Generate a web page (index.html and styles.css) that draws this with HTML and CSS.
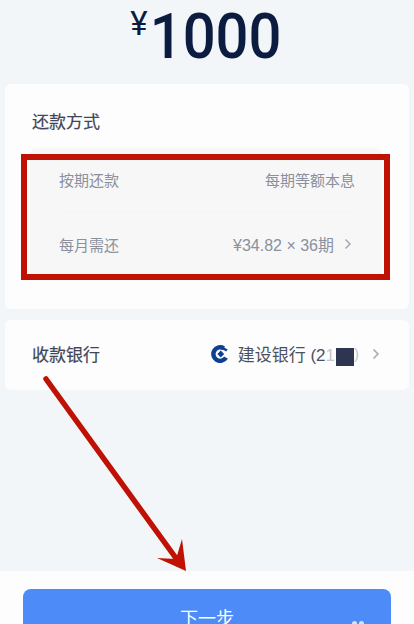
FILE: index.html
```html
<!DOCTYPE html>
<html lang="zh-CN">
<head>
  <meta charset="UTF-8">
  <meta name="viewport" content="width=device-width, initial-scale=1.0">
  <title>还款方式</title>
  <link rel="stylesheet" href="styles.css">
</head>
<body>
  <div class="page">
    <div class="amount">
      <span class="currency">¥</span><span class="value">1000</span>
    </div>

    <div class="card repay-card">
      <div class="card-title">还款方式</div>
      <div class="repay-panel">
        <div class="repay-row">
          <span>按期还款</span>
          <span>每期等额本息</span>
        </div>
        <div class="repay-row second">
          <span>每月需还</span>
          <span class="with-arrow"><span class="monthly">¥34.82 × 36期</span><svg class="chevron" viewBox="0 0 8 12"><path d="M1.500 1.500 6 6l-4.500 4.500"/></svg></span>
        </div>
      </div>
    </div>

    <div class="card bank-card">
      <div class="bank-label">收款银行</div>
      <div class="bank-value">
        <svg class="bank-logo" viewBox="0 0 18 18">
          <path d="M12.800 3.300A6.800 6.800 0 1 0 15 12.600" fill="none" stroke="#0f3f93" stroke-width="4.400"/>
          <path d="M9.800 5.600 13.200 9 9.800 12.400 6.400 9z" fill="#0f3f93"/>
          <path d="M10 .400 16.600 4.400 15.200 6.600 8.600 2.800z" fill="#0f3f93"/>
        </svg>
        <span class="bank-name">建设银行 (2<span class="fade">1</span></span>
        <span class="mask"></span>
        <span class="fade paren">)</span>
        <svg class="chevron bank-chevron" viewBox="0 0 8 12"><path d="M1.500 1.500 6 6l-4.500 4.500"/></svg>
      </div>
    </div>

    <div class="spacer"></div>

    <div class="footer">
      <button class="next-btn">下一步<span class="dots"><i></i><i></i></span></button>
    </div>

    <div class="mark-box"></div>
    <svg class="mark-arrow" viewBox="0 0 414 624">
      <line x1="46" y1="379" x2="178" y2="561" />
      <path d="M186 571 182 539 176 559 157 558z" />
    </svg>
  </div>
</body>
</html>
```

FILE: styles.css
```css
* {
  box-sizing: border-box;
}
html, body {
  margin: 0;
  padding: 0;
}
body {
  font-family: "Liberation Sans", "Noto Sans CJK SC", sans-serif;
  background: #f2f6f8;
}
.page {
  position: relative;
  width: 414px;
  height: 624px;
  overflow: hidden;
  display: flex;
  flex-direction: column;
  background: #f2f6f8;
}
.amount {
  height: 84px;
  padding: 1px 3px 0 0;
  display: flex;
  justify-content: center;
  align-items: flex-start;
  color: #0c1c40;
  font-family: Roboto, "Liberation Sans", sans-serif;
}
.currency {
  font-size: 33px;
  line-height: 46px;
  margin-right: 2px;
}
.value {
  display: inline-block;
  margin: 0 -6px;
  font-size: 63px;
  line-height: 72px;
  font-weight: 500;
  transform: scaleX(.92);
}
.card {
  margin: 0 5px;
  background: #fdfdfd;
  border-radius: 6px;
}
.repay-card {
  height: 225px;
  padding: 27px 27px 0 27px;
}
.card-title {
  font-size: 17px;
  line-height: 24px;
  color: #3f4658;
  -webkit-text-stroke: .2px #3f4658;
}
.repay-panel {
  margin: 13px 0 0 -2px;
  background: #f7f7f8;
  border-radius: 6px;
  padding: 0 27px 0 29px;
  height: 132px;
}
.repay-row {
  display: flex;
  justify-content: space-between;
  align-items: center;
  height: 64px;
  padding-bottom: 1px;
  font-size: 15px;
  color: #8b909c;
  border-bottom: 1px solid #f3f4f5;
}
.repay-row.second {
  border-bottom: none;
  height: 65px;
}
.monthly {
  font-size: 16px;
}
.with-arrow {
  display: flex;
  align-items: center;
}
.with-arrow .chevron {
  margin-right: 3px;
}
.chevron {
  width: 8px;
  height: 12px;
  margin-left: 10px;
  fill: none;
  stroke: #a3a8b3;
  stroke-width: 1.500;
}
.bank-card {
  margin-top: 11px;
  height: 70px;
  padding: 0 29px 3px 27px;
  display: flex;
  justify-content: space-between;
  align-items: center;
}
.bank-label {
  font-size: 17px;
  color: #3f4658;
  -webkit-text-stroke: .2px #3f4658;
}
.bank-value {
  display: flex;
  align-items: center;
  font-size: 17px;
  color: #4a5060;
}
.bank-logo {
  width: 18px;
  height: 18px;
  margin-right: 9px;
}
.bank-name {
  white-space: nowrap;
}
.fade {
  color: #c3c6cd;
}
.mask {
  width: 18px;
  height: 18px;
  margin: 7px 0 0 1px;
  background: #2d3550;
}
.paren {
  font-size: 15px;
}
.bank-chevron {
  margin-left: 13px;
}
.spacer {
  flex: 1;
}
.footer {
  height: 53px;
  padding: 18px 23px 0;
  background: #fdfdfd;
}
.next-btn {
  position: relative;
  display: block;
  width: 368px;
  height: 35px;
  border: none;
  border-radius: 8px 8px 0 0;
  background: #4d8cf8;
  color: #fff;
  font: 18px/26px "Liberation Sans", "Noto Sans CJK SC", sans-serif;
  padding: 17px 0 0;
  text-align: center;
  overflow: hidden;
}
.dots {
  position: absolute;
  left: 329px;
  top: 32px;
  display: flex;
  gap: 2px;
}
.dots i {
  width: 5px;
  height: 5px;
  border-radius: 50%;
  background: #d5e2fb;
}
.mark-box {
  position: absolute;
  left: 21px;
  top: 154px;
  width: 369px;
  height: 126px;
  border: 6px solid #c01204;
}
.mark-arrow {
  position: absolute;
  left: 0;
  top: 0;
  width: 414px;
  height: 624px;
  pointer-events: none;
}
.mark-arrow line {
  stroke: #c01204;
  stroke-width: 5.500;
  stroke-linecap: round;
}
.mark-arrow path {
  fill: #c01204;
}
```
